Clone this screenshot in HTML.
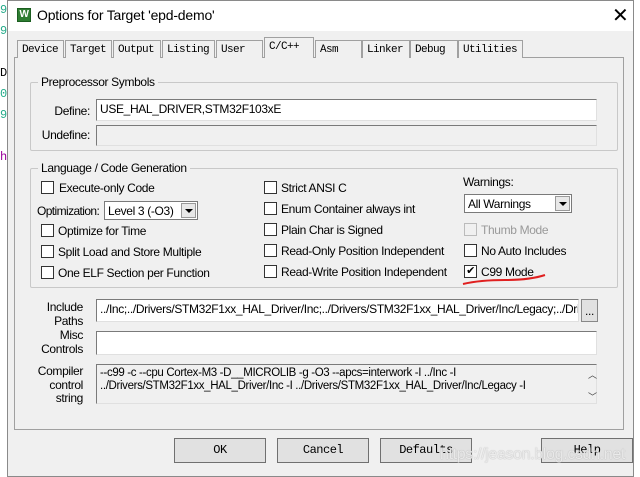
<!DOCTYPE html>
<html><head><style>
*{box-sizing:border-box;margin:0;padding:0}
body{width:640px;height:477px;overflow:hidden;background:#fff;position:relative;font-family:"Liberation Sans",sans-serif;font-size:12px;letter-spacing:-0.35px;color:#000}
.a{position:absolute}
.dlg{left:7px;top:0;width:627px;height:477px;background:#f0f0f0;border:1px solid #8a8a8a}
.title{left:8px;top:1px;width:625px;height:30px;background:#fff}
.tab{position:absolute;top:40px;height:18px;border:1px solid #a0a0a0;border-bottom:none;background:#f0f0f0;font-family:"Liberation Mono",monospace;font-size:11px;letter-spacing:-0.6px;padding:2px 0 0 4px;line-height:14px}
.panel{left:14px;top:57px;width:610px;height:373px;border:1px solid #a0a0a0;background:#f0f0f0}
.grp{border:1px solid #c8c8c8;border-radius:2px}
.gt{background:#f0f0f0;padding:0 3px}
.in{background:#fff;border:1px solid #7a7a7a;border-right-color:#e0e0e0;border-bottom-color:#e0e0e0;height:22px;padding:2px 3px;white-space:nowrap;overflow:hidden}
.dis{background:#f0f0f0}
.cb{width:13px;height:13px;border:1px solid #333;background:#fff}
.lb{white-space:nowrap;line-height:14px}
.sel{background:#fff;border:1px solid #7a7a7a;height:19px;padding:2px 3px;white-space:nowrap}
.arr{position:absolute;right:1px;top:1px;width:15px;height:15px;background:#e8e8e8;border:1px solid #999}
.arr:after{content:"";position:absolute;left:3px;top:5px;border-left:4px solid transparent;border-right:4px solid transparent;border-top:4px solid #000}
.btn{position:absolute;top:438px;width:92px;height:25px;border:1px solid #707070;background:#e1e1e1;font-family:"Liberation Mono",monospace;font-size:12px;letter-spacing:-0.5px;text-align:center;line-height:23px}
.r{text-align:right}
</style></head><body>
<div class="a" style="left:0;top:0;width:7px;height:477px;font-family:'Liberation Mono',monospace;font-size:12px;line-height:21px;color:#000;overflow:hidden">
<div style="color:#2a8">9</div><div style="color:#2a8">9</div><div>&nbsp;</div><div>D</div><div style="color:#2a8">0</div><div style="color:#2a8">9</div><div>&nbsp;</div><div style="color:#909">h</div>
</div>
<div class="a dlg"></div>
<div class="a title"></div>
<div class="a" style="left:17px;top:8px;width:14px;height:14px;background:#2e7d32;border:1px solid #1b5e20;color:#fff;font-size:10px;font-weight:bold;line-height:12px;text-align:center">W</div>
<div class="a" style="left:37px;top:7px;font-size:14px;letter-spacing:-0.2px">Options for Target 'epd-demo'</div>
<div class="a" style="left:612px;top:3px;font-size:20px;font-weight:300">✕</div>

<div class="a panel"></div>
<div class="tab" style="left:17px;width:47px">Device</div>
<div class="tab" style="left:65px;width:47px">Target</div>
<div class="tab" style="left:113px;width:48px">Output</div>
<div class="tab" style="left:162px;width:53px">Listing</div>
<div class="tab" style="left:216px;width:47px">User</div>
<div class="tab" style="left:264px;top:37px;height:21px;width:50px;z-index:2;padding-top:2px">C/C++</div>
<div class="tab" style="left:315px;width:47px">Asm</div>
<div class="tab" style="left:362px;width:48px">Linker</div>
<div class="tab" style="left:410px;width:48px">Debug</div>
<div class="tab" style="left:458px;width:65px">Utilities</div>

<div class="a grp" style="left:30px;top:82px;width:588px;height:69px"></div>
<div class="a gt" style="left:38px;top:75px">Preprocessor Symbols</div>
<div class="a lb r" style="left:30px;top:104px;width:60px">Define:</div>
<div class="a in" style="left:96px;top:99px;width:501px">USE_HAL_DRIVER,STM32F103xE</div>
<div class="a lb r" style="left:30px;top:128px;width:60px">Undefine:</div>
<div class="a in dis" style="left:96px;top:125px;width:501px;height:21px"></div>

<div class="a grp" style="left:30px;top:168px;width:588px;height:120px"></div>
<div class="a gt" style="left:38px;top:161px">Language / Code Generation</div>

<div class="a cb" style="left:41px;top:181px"></div><div class="a lb" style="left:59px;top:181px">Execute-only Code</div>
<div class="a lb" style="left:37px;top:204px;letter-spacing:-0.6px">Optimization:</div>
<div class="a sel" style="left:104px;top:201px;width:94px">Level 3 (-O3)<span class="arr"></span></div>
<div class="a cb" style="left:41px;top:224px"></div><div class="a lb" style="left:58px;top:224px">Optimize for Time</div>
<div class="a cb" style="left:41px;top:245px"></div><div class="a lb" style="left:58px;top:245px">Split Load and Store Multiple</div>
<div class="a cb" style="left:41px;top:266px"></div><div class="a lb" style="left:58px;top:266px">One ELF Section per Function</div>

<div class="a cb" style="left:264px;top:181px"></div><div class="a lb" style="left:281px;top:181px">Strict ANSI C</div>
<div class="a cb" style="left:264px;top:202px"></div><div class="a lb" style="left:281px;top:202px">Enum Container always int</div>
<div class="a cb" style="left:264px;top:223px"></div><div class="a lb" style="left:281px;top:223px">Plain Char is Signed</div>
<div class="a cb" style="left:264px;top:244px"></div><div class="a lb" style="left:281px;top:244px">Read-Only Position Independent</div>
<div class="a cb" style="left:264px;top:265px"></div><div class="a lb" style="left:281px;top:265px">Read-Write Position Independent</div>

<div class="a lb" style="left:463px;top:175px">Warnings:</div>
<div class="a sel" style="left:464px;top:194px;width:108px">All Warnings<span class="arr"></span></div>
<div class="a cb" style="left:464px;top:223px;border-color:#bbb;background:#f0f0f0"></div><div class="a lb" style="left:481px;top:223px;color:#999">Thumb Mode</div>
<div class="a cb" style="left:464px;top:244px"></div><div class="a lb" style="left:481px;top:244px">No Auto Includes</div>
<div class="a cb" style="left:464px;top:265px;font-size:11px;line-height:11px;text-align:center">✔</div><div class="a lb" style="left:481px;top:265px">C99 Mode</div>
<svg class="a" style="left:460px;top:272px" width="90" height="16"><path d="M3 12 Q20 8 45 8 T85 3" stroke="#e02020" stroke-width="2" fill="none"/></svg>

<div class="a lb r" style="left:30px;top:300px;width:53px">Include<br>Paths</div>
<div class="a in" style="left:96px;top:299px;width:483px;height:23px">../Inc;../Drivers/STM32F1xx_HAL_Driver/Inc;../Drivers/STM32F1xx_HAL_Driver/Inc/Legacy;../Driv</div>
<div class="a" style="left:581px;top:299px;width:17px;height:23px;border:1px solid #888;background:#e1e1e1;text-align:center;line-height:22px">...</div>
<div class="a lb r" style="left:30px;top:328px;width:53px">Misc<br>Controls</div>
<div class="a in" style="left:96px;top:331px;width:501px;height:24px"></div>
<div class="a lb r" style="left:30px;top:365px;width:53px;line-height:13.5px">Compiler<br>control<br>string</div>
<div class="a in dis" style="left:96px;top:364px;width:501px;height:40px;line-height:13px;font-size:11.5px">--c99 -c --cpu Cortex-M3 -D__MICROLIB -g -O3 --apcs=interwork -I ../Inc -I<br>../Drivers/STM32F1xx_HAL_Driver/Inc -I ../Drivers/STM32F1xx_HAL_Driver/Inc/Legacy -I</div>
<div class="a" style="left:588px;top:368px;font-size:9px;color:#444">︿</div>
<div class="a" style="left:588px;top:390px;font-size:9px;color:#444">﹀</div>

<div class="btn" style="left:174px">OK</div>
<div class="btn" style="left:277px">Cancel</div>
<div class="btn" style="left:380px">Defaults</div>
<div class="btn" style="left:541px">Help</div>
<div class="a" style="left:440px;top:446px;font-size:16px;color:rgba(255,255,255,.75);text-shadow:0 0 1px #999">https://jeason.blog.csdn.net</div>
</body></html>
